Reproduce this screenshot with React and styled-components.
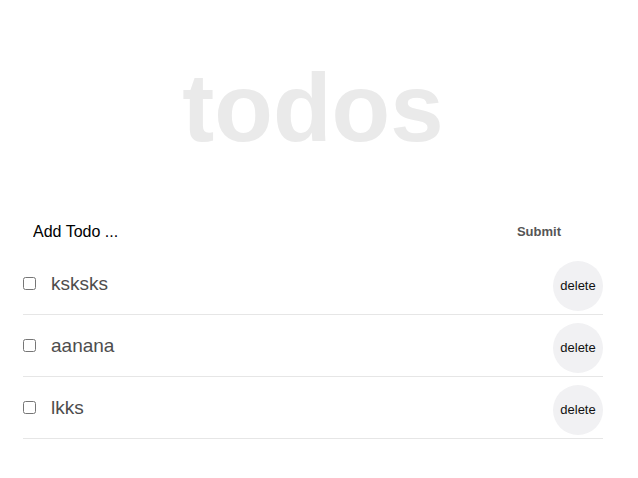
import React, { useState } from 'react';
import styled, { createGlobalStyle } from 'styled-components';

const GlobalStyle = createGlobalStyle`
    body {
        margin: 0;
        background: #fff;
        font-family: "Liberation Sans", Arial, sans-serif;
    }
`;

const Wrapper = styled.div`
    width: 580px;
    margin-left: 23px;
`;

const Title = styled.h1`
    margin: 0;
    padding-top: 60px;
    height: 150px;
    box-sizing: border-box;
    font-size: 96px;
    line-height: 96px;
    font-weight: bold;
    text-align: center;
    color: #eaeaea;
`;

const Form = styled.form`
    display: flex;
    align-items: center;
    height: 43px;
    margin-top: 60px;
`;

const Input = styled.input`
    flex: 1;
    border: none;
    outline: none;
    padding: 0 0 0 10px;
    font-family: inherit;
    font-size: 16px;
    color: #000;
    background: transparent;

    &::placeholder {
        color: #000;
    }
`;

const SubmitButton = styled.button`
    border: none;
    background: transparent;
    padding: 0;
    margin-right: 42px;
    font-family: inherit;
    font-size: 13px;
    font-weight: bold;
    color: #555;
    cursor: pointer;
`;

const List = styled.ul`
    list-style: none;
    margin: 0;
    padding: 0;
`;

const Row = styled.li`
    display: flex;
    align-items: center;
    padding: 8px 0 3px;
    border-bottom: 1px solid #e6e6e6;
`;

const Check = styled.input`
    width: 13px;
    height: 13px;
    margin: 0 15px 5px 0;
`;

const Label = styled.span`
    flex: 1;
    font-size: 19px;
    color: #4d4d4d;
    margin-bottom: 4px;
`;

const DeleteButton = styled.button`
    width: 50px;
    height: 50px;
    border-radius: 50%;
    border: none;
    padding: 0 0 2px;
    background: #f1f1f3;
    font-family: inherit;
    font-size: 13px;
    color: #111;
    cursor: pointer;
`;

export default function App() {
    const [todos, setTodos] = useState([
        { id: 1, text: 'ksksks', done: false },
        { id: 2, text: 'aanana', done: false },
        { id: 3, text: 'lkks', done: false }
    ]);
    const [text, setText] = useState('');

    const submit = e => {
        e.preventDefault();
        if (!text.trim()) return;
        setTodos([...todos, { id: Date.now(), text, done: false }]);
        setText('');
    };

    return (
        <Wrapper>
            <GlobalStyle />
            <Title>todos</Title>
            <Form onSubmit={submit}>
                <Input placeholder="Add Todo ..." value={text} onChange={e => setText(e.target.value)} />
                <SubmitButton type="submit">Submit</SubmitButton>
            </Form>
            <List>
                {todos.map(todo => (
                    <Row key={todo.id}>
                        <Check
                            type="checkbox"
                            checked={todo.done}
                            onChange={() => setTodos(todos.map(t => t.id === todo.id ? { ...t, done: !t.done } : t))}
                        />
                        <Label>{todo.text}</Label>
                        <DeleteButton onClick={() => setTodos(todos.filter(t => t.id !== todo.id))}>delete</DeleteButton>
                    </Row>
                ))}
            </List>
        </Wrapper>
    );
}
